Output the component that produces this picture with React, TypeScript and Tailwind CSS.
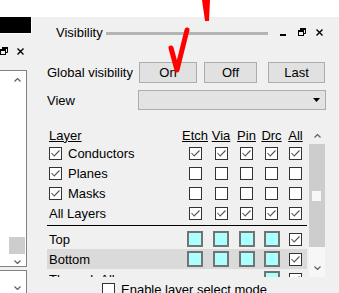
import React from 'react';

type Row = {
  name: string;
  box?: boolean;
  cells: ('c' | 'e' | 's' | 'n')[];
  hl?: boolean;
};

const topRows: Row[] = [
  { name: 'Conductors', box: true, cells: ['c', 'c', 'c', 'c', 'c'] },
  { name: 'Planes', box: true, cells: ['e', 'e', 'e', 'e', 'e'] },
  { name: 'Masks', box: true, cells: ['e', 'e', 'e', 'e', 'e'] },
  { name: 'All Layers', cells: ['c', 'c', 'c', 'c', 'c'] },
];

const layerRows: Row[] = [
  { name: 'Top', cells: ['s', 's', 's', 's', 'c'] },
  { name: 'Bottom', cells: ['s', 's', 's', 's', 'c'], hl: true },
  { name: 'Through All', cells: ['n', 'n', 'n', 's', 'c'] },
];

const Check = ({ on }: { on: boolean }) => (
  <div className="w-[13px] h-[13px] border border-[#333] bg-white flex items-center justify-center shrink-0">
    {on && (
      <svg width="11" height="11" viewBox="0 0 11 11">
        <path d="M1.5 5 L4.2 8 L9.5 2.5" fill="none" stroke="#555" strokeWidth="1.1" />
      </svg>
    )}
  </div>
);

const Swatch = () => <div className="w-[16px] h-[16px] border-2 border-[#737373] bg-[#aaffff]" />;

const Restore = () => (
  <svg width="8" height="8" viewBox="0 0 8 8" className="shrink-0">
    <path d="M2.5 0.5 H7.5 V5.5 H5.5" fill="none" stroke="#000" strokeWidth="1" />
    <rect x="2" y="0" width="6" height="2" fill="#000" />
    <rect x="0.5" y="2.5" width="5" height="5" fill="#f0f0f0" stroke="#000" strokeWidth="1" />
    <rect x="0" y="2" width="6" height="2" fill="#000" />
  </svg>
);

const Close = () => (
  <svg width="7" height="7" viewBox="0 0 7 7" className="shrink-0">
    <path d="M0.5 0.5 L6.5 6.5 M6.5 0.5 L0.5 6.5" stroke="#000" strokeWidth="1.4" />
  </svg>
);

const Chevron = ({ up }: { up?: boolean }) => (
  <svg width="7" height="4" viewBox="0 0 7 4">
    <path d={up ? 'M0.5 3.5 L3.5 0.5 L6.5 3.5' : 'M0.5 0.5 L3.5 3.5 L6.5 0.5'} fill="none" stroke="#606060" strokeWidth="1.2" />
  </svg>
);

const cols = 'grid grid-cols-[135px_26px_26px_25px_25px_23px] items-center shrink-0';

const TableRow = ({ row }: { row: Row }) => (
  <div className={`${cols} h-[20px] ${row.hl ? 'bg-[#dadada]' : ''}`}>
    <div className="flex items-center pl-[2px]">
      {row.box && <Check on />}
      <span className={row.box ? 'ml-[6px]' : ''}>{row.name}</span>
    </div>
    {row.cells.map((c, i) => (
      <div key={i} className="flex justify-center">
        {c === 'c' && <Check on />}
        {c === 'e' && <Check on={false} />}
        {c === 's' && <Swatch />}
      </div>
    ))}
  </div>
);

export default function App() {
  return (
    <div className="relative w-[339px] h-[293px] overflow-hidden bg-[#f0f0f0] text-[13px] leading-none text-black font-['Liberation_Sans',Arial,sans-serif]">
      <div className="h-[17px] bg-white" />
      <div className="flex">
        {/* left docked panel, mostly cut off */}
        <div className="w-[34px] shrink-0 flex flex-col">
          <div className="w-[32px] h-[17px] bg-black border-r border-b border-white" />
          <div className="mt-[13px] h-[8px] flex items-center">
            <Restore />
            <div className="ml-[9px]">
              <Close />
            </div>
          </div>
          <div className="mt-[15px] w-[27px] h-[197px] bg-white border-t border-r border-b border-[#828282] flex justify-end">
            <div className="w-[16px] mr-[1px] flex flex-col">
              <div className="h-[17px] flex items-center justify-center">
                <Chevron up />
              </div>
              <div className="flex-1" />
              <div className="h-[17px] bg-[#cdcdcd]" />
              <div className="h-[12px] pt-[6px] flex justify-center">
                <Chevron />
              </div>
            </div>
          </div>
          <div className="mt-[3px] w-[27px] h-[30px] bg-white border-t border-r border-[#828282] flex justify-end">
            <div className="w-[16px] mr-[1px] pt-[15px] flex justify-center">
              <Chevron />
            </div>
          </div>
        </div>

        {/* Visibility panel */}
        <div className="w-[305px] shrink-0 pl-[13px] flex flex-col">
          <div className="h-[30px] flex items-center">
            <span className="ml-[9px]">Visibility</span>
            <div className="flex-1 h-[3px] ml-[3px] mt-[2px] bg-[#b4b4b4]" />
            <div className="w-[71px] shrink-0 flex items-center">
              <div className="ml-[12px] mt-[6px] w-[6px] h-[2px] bg-black" />
              <div className="ml-[12px]">
                <Restore />
              </div>
              <div className="ml-[10px]">
                <Close />
              </div>
            </div>
          </div>

          <div className="mt-[15px] h-[21px] flex items-center">
            <span className="w-[92px] shrink-0">Global visibility</span>
            <button className="w-[58px] h-[21px] bg-[#e1e1e1] border border-[#adadad]">On</button>
            <button className="ml-[7px] w-[53px] h-[21px] bg-[#e1e1e1] border border-[#adadad]">Off</button>
            <button className="ml-[11px] w-[57px] h-[21px] bg-[#e1e1e1] border border-[#adadad]">Last</button>
          </div>

          <div className="mt-[7px] h-[20px] flex items-center">
            <span className="w-[91px] shrink-0">View</span>
            <div className="w-[188px] h-[20px] bg-[#e3e3e3] border border-[#adadad] flex items-center justify-end pr-[5px]">
              <svg width="7" height="4" viewBox="0 0 7 4">
                <path d="M0 0 H7 L3.5 4 Z" fill="#000" />
              </svg>
            </div>
          </div>

          <div className="mt-[17px] h-[150px] flex overflow-hidden">
            <div className="w-[260px] shrink-0 flex flex-col">
              <div className={`${cols} h-[16px]`}>
                <span className="pl-[2px] underline">Layer</span>
                {['Etch', 'Via', 'Pin', 'Drc', 'All'].map(h => (
                  <span key={h} className="text-center underline">
                    {h}
                  </span>
                ))}
              </div>
              {topRows.map(r => (
                <TableRow key={r.name} row={r} />
              ))}
              <div className="mt-[2px] mb-[3px] h-px shrink-0 bg-black" />
              {layerRows.map(r => (
                <TableRow key={r.name} row={r} />
              ))}
            </div>
            <div className="ml-[2px] w-[16px] shrink-0 flex flex-col">
              <div className="h-[17px] shrink-0 flex items-center justify-center">
                <Chevron up />
              </div>
              <div className="h-[103px] shrink-0 bg-[#cdcdcd] pt-[47px] pl-[3px]">
                <div className="w-[9px] h-[10px] bg-[#f7f7f7]" />
              </div>
              <div className="flex-1 bg-[#f7f7f7] pt-[19px] flex justify-center">
                <Chevron />
              </div>
            </div>
          </div>

          <div className="pt-[6px] flex items-center">
            <div className="ml-[55px]">
              <Check on={false} />
            </div>
            <span className="ml-[6px]">Enable layer select mode</span>
          </div>
        </div>
      </div>

      {/* red annotation marks */}
      <svg className="absolute inset-0 pointer-events-none" width="339" height="293" viewBox="0 0 339 293">
        <polygon points="202,0 210,0 209,21 205,21" fill="#ff0000" />
        <polyline points="171,48 177,70 187,30" fill="none" stroke="#ff0000" strokeWidth="5" strokeLinecap="round" strokeLinejoin="round" />
      </svg>
    </div>
  );
}
